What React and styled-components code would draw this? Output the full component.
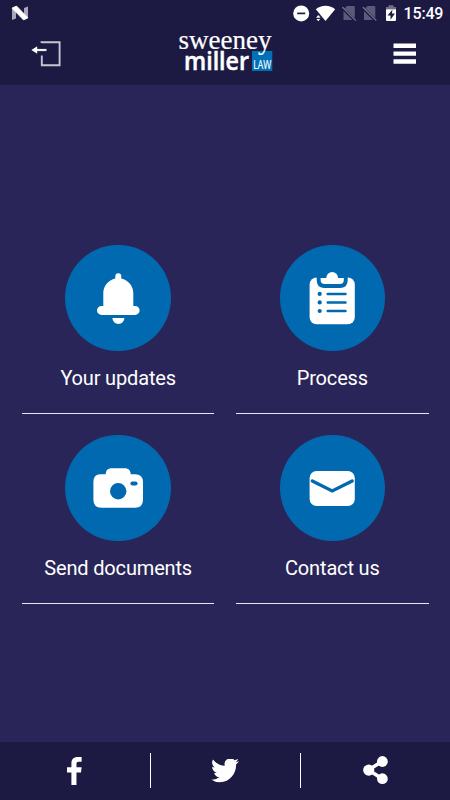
import React from "react";
import styled, { createGlobalStyle } from "styled-components";

const Global = createGlobalStyle`
  *, *::before, *::after { box-sizing: border-box; }
  body { margin: 0; background: #2a2558; }
  button { border: 0; padding: 0; background: none; color: inherit; font: inherit; }
  svg { display: block; flex: none; }
`;

const Screen = styled.div`
  width: 450px;
  height: 800px;
  display: flex;
  flex-direction: column;
  overflow: hidden;
  background: #2a2558;
  color: #fff;
  font-family: Roboto, sans-serif;
`;

const TopArea = styled.header`
  height: 85px;
  background: #1c1942;
`;

const StatusBar = styled.div`
  height: 27px;
  display: flex;
  justify-content: space-between;
  padding: 0 7px 0 11px;
`;

const StatusIcons = styled.div`
  display: flex;
`;

const Clock = styled.span`
  width: 41px;
  padding-left: 1.6px;
  white-space: nowrap;
  font-size: 16px;
  font-weight: 500;
  line-height: 28px;
  letter-spacing: -0.2px;
`;

const NavBar = styled.div`
  height: 58px;
  display: grid;
  grid-template-columns: 176px 1fr 176px;
`;

const NavButton = styled.button`
  display: flex;
`;

const Menu = styled.main`
  flex: 1;
  display: grid;
  grid-template-columns: 192.5px 192.5px;
  grid-auto-rows: 169px;
  column-gap: 21.7px;
  row-gap: 21.3px;
  align-content: start;
  padding: 159.8px 0 0 21.9px;
`;

const Tile = styled.button`
  display: flex;
  flex-direction: column;
  align-items: center;
  border-bottom: 1px solid #e8e6f2;
`;

const Disc = styled.span`
  width: 105.4px;
  height: 106.4px;
  border-radius: 50%;
  background: #0069b0;
  display: flex;
  align-items: center;
  justify-content: center;
`;

const TileLabel = styled.span`
  margin-top: 14.8px;
  font-size: 20px;
  line-height: 24px;
  letter-spacing: -0.16px;
  white-space: nowrap;
`;

const Footer = styled.footer`
  height: 58.5px;
  display: grid;
  grid-template-columns: 151px 150px 149px;
  align-items: center;
  background: #1c1942;
`;

const SocialButton = styled.button`
  height: 35px;
  display: flex;
  align-items: center;
  justify-content: center;
  padding-right: ${(p) => (p.$divided ? "1px" : "0")};
  border-right: ${(p) => (p.$divided ? "1px solid #fff" : "0")};
`;

const NougatIcon = () => (
  <svg width="18" height="27" viewBox="11 0 18 27">
    <path d="M12 7.5 16 6v12.5L12 20ZM24 8l4-1.5V18l-4 2Z" fill="#a9a7b8" />
    <path d="M12 8.2 16.6 6 28 17.8 23.5 20Z" fill="#fff" stroke="#fff" strokeWidth=".6" />
  </svg>
);

const StatusGlyphs = () => (
  <svg width="112" height="27" viewBox="290 0 112 27">
    <circle cx="301.2" cy="13.4" r="8" fill="#fff" />
    <path d="M297.2 13.4h8" stroke="#1c1942" strokeWidth="1.7" />
    <path d="M315.8 9.3C321 4.4 330 4.4 335.2 9.3L325.5 21Z" fill="#fff" />
    <path d="M316 17.7 318.3 15l2.3 2.7ZM316.4 18.9h3.8l-1.9 2.3Z" fill="#fff" />
    {[0, 20.5].map((x) => (
      <g key={x} transform={`translate(${x} 0)`}>
        <path d="M343.5 9.5 347 6h6.5q1.3 0 1.3 1.3V20h-11.3Z" fill="#5c597a" />
        <path d="M341.5 7 356 21.5" stroke="#1c1942" strokeWidth="3" />
        <path d="m342.3 7 13.5 13.7" stroke="#777490" strokeWidth="1.2" />
      </g>
    ))}
    <path d="M386 9.2V7h2.5V5.2h5V7h2.5v2.2Z" fill="#706e87" />
    <path d="M386 9.2h10V20q0 1-1 1h-8q-1 0-1-1Z" fill="#fff" />
    <path d="m392.5 9.5-5 6h3v4.2l4.4-6.1h-3Z" fill="#1c1942" />
  </svg>
);

const ExitIcon = () => (
  <svg width="70" height="58" viewBox="0 27 70 58" fill="none">
    <path d="M41.5 43V42.3H59.6V65.2H41.8V55.5" stroke="#c7c5d2" strokeWidth="1.9" />
    <path d="M37 50h9.5" stroke="#f0eff5" strokeWidth="2.2" />
    <path d="m31.4 50 5.8-3.8v7.6Z" fill="#fff" />
  </svg>
);

const BrandLogo = () => (
  <svg width="98" height="58" viewBox="176 27 98 58" fill="#fff">
    <rect x="252" y="51" width="20.3" height="20" fill="#0070b8" />
    <text x="178.5" y="49.1" fontFamily="Liberation Serif, serif" fontSize="28" textLength="93" lengthAdjust="spacingAndGlyphs" stroke="#fff" strokeWidth=".2">sweeney</text>
    <text x="184" y="70.2" fontFamily="Open Sans, sans-serif" fontWeight="600" fontSize="25" textLength="65" lengthAdjust="spacingAndGlyphs" stroke="#fff" strokeWidth=".5">miller</text>
    <text x="253.2" y="68.6" fontFamily="Open Sans, sans-serif" fontSize="12.4" textLength="18" lengthAdjust="spacingAndGlyphs" stroke="#fff" strokeWidth=".2">LAW</text>
  </svg>
);

const MenuIcon = () => (
  <svg width="176" height="58" viewBox="274 27 176 58">
    <path d="M393.5 45.7h22.5M393.5 53.6h22.5M393.5 61.5h22.5" stroke="#fff" strokeWidth="4.4" />
  </svg>
);

const TileArt = ({ children }) => (
  <svg width="70" height="70" viewBox="0 0 70 70" fill="#fff">{children}</svg>
);

const BellIcon = () => (
  <TileArt>
    <path d="M32 15.5v-2.1a3 3 0 0 1 6 0v2.1C45 17 50 23 50 30v13h1.8a4.4 4.4 0 0 1 0 9H18.2a4.4 4.4 0 0 1 0-9H20V30c0-7 5-13 12-14.5Z" transform="translate(.3 -.1)" />
    <path d="M29.4 55h12a6 6 0 0 1-12 0Z" />
  </TileArt>
);

const ClipboardIcon = () => (
  <TileArt>
    <rect x="12.6" y="14.5" width="45.2" height="46.7" rx="7" />
    <path d="M19.7 13.5h31v3.6q0 7.8-7 7.8H26.7q-7 0-7-7.8Z" fill="#0069b0" />
    <circle cx="35.2" cy="15" r="5.9" />
    <path d="M23.6 14.9h23.2v2q0 4-4 4H27.6q-4 0-4-4Z" />
    <g fill="#0069b0">
      <circle cx="22.7" cy="30.9" r="2.1" /><circle cx="22.7" cy="39.4" r="2.1" /><circle cx="22.7" cy="48" r="2.1" />
    </g>
    <path d="M30.7 30.9h17.8M30.7 39.4h17.8M30.7 48h17.8" stroke="#0069b0" strokeWidth="2.5" strokeLinecap="round" />
  </TileArt>
);

const CameraIcon = () => (
  <TileArt>
    <path d="M17.2 21.2h5.5c0-4 2.5-6 6-6h13c3.5 0 6 2 6 6H52q8 0 8 8v17.5q0 8-8 8H18.4q-8 0-8-8V29.2q0-8 6.8-8Z" />
    <circle cx="35.2" cy="38.2" r="8.2" fill="#0069b0" />
    <rect x="47.4" y="28.4" width="7.2" height="4.2" rx="2.1" fill="#0069b0" />
  </TileArt>
);

const MailIcon = () => (
  <TileArt>
    <rect x="12.6" y="18" width="45.2" height="35" rx="7" />
    <path d="m15.3 28 19.9 10 20-10" fill="none" stroke="#0069b0" strokeWidth="3.3" strokeLinecap="round" />
  </TileArt>
);

const FacebookIcon = () => (
  <svg width="15" height="28" viewBox="0 0 16 28" preserveAspectRatio="none">
    <path d="M15.6 0v4.8h-3c-2 0-2.5.9-2.5 2.5v2.9h5.5l-.7 5.2h-4.8V28H4.7V15.4H0v-5.2h4.7V6.4C4.7 2 7.4 0 11.5 0Z" fill="#fff" />
  </svg>
);

const TwitterIcon = () => (
  <svg width="28" height="24" viewBox="0 2.8 24 19.5" preserveAspectRatio="none">
    <path d="M23.95 4.57a10 10 0 0 1-2.82.77 4.96 4.96 0 0 0 2.16-2.72c-.95.55-2 .95-3.13 1.18a4.92 4.92 0 0 0-8.38 4.48C7.69 8.1 4.07 6.13 1.64 3.16a4.92 4.92 0 0 0 1.52 6.57 4.9 4.9 0 0 1-2.23-.61v.06c0 2.39 1.7 4.37 3.95 4.83a5 5 0 0 1-2.21.08 4.94 4.94 0 0 0 4.6 3.42A9.87 9.87 0 0 1 0 19.54a13.94 13.94 0 0 0 7.55 2.21c9.05 0 14-7.5 14-13.98 0-.21 0-.42-.02-.63a9.94 9.94 0 0 0 2.42-2.57Z" fill="#fff" />
  </svg>
);

const ShareIcon = () => (
  <svg width="25" height="30" viewBox="0 0 25 30" fill="#fff">
    <path d="M19.2 5.3 5.5 14l13.7 8.7" fill="none" stroke="#fff" strokeWidth="3.6" />
    <circle cx="19.4" cy="5.5" r="5.4" /><circle cx="5.7" cy="14.1" r="5.6" /><circle cx="19.4" cy="22.7" r="5.4" />
  </svg>
);

const tiles = [
  { label: "Your updates", Icon: BellIcon },
  { label: "Process", Icon: ClipboardIcon },
  { label: "Send documents", Icon: CameraIcon },
  { label: "Contact us", Icon: MailIcon },
];

export default function App() {
  return (
    <>
      <Global />
      <Screen>
        <TopArea>
          <StatusBar>
            <NougatIcon />
            <StatusIcons>
              <StatusGlyphs />
              <Clock>15:49</Clock>
            </StatusIcons>
          </StatusBar>
          <NavBar>
            <NavButton aria-label="Log out"><ExitIcon /></NavButton>
            <BrandLogo />
            <NavButton aria-label="Menu"><MenuIcon /></NavButton>
          </NavBar>
        </TopArea>
        <Menu>
          {tiles.map(({ label, Icon }) => (
            <Tile key={label}>
              <Disc><Icon /></Disc>
              <TileLabel>{label}</TileLabel>
            </Tile>
          ))}
        </Menu>
        <Footer>
          <SocialButton $divided aria-label="Facebook"><FacebookIcon /></SocialButton>
          <SocialButton $divided aria-label="Twitter"><TwitterIcon /></SocialButton>
          <SocialButton aria-label="Share"><ShareIcon /></SocialButton>
        </Footer>
      </Screen>
    </>
  );
}
